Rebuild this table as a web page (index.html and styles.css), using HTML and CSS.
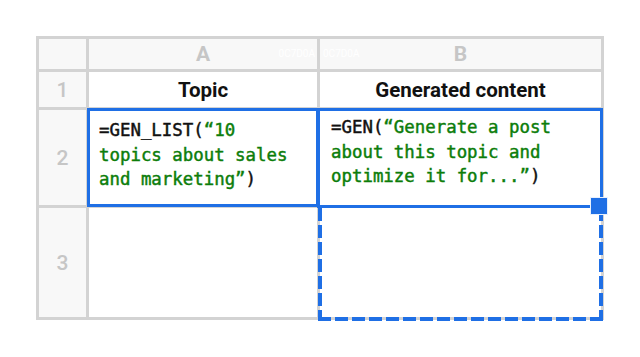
FILE: index.html
```html
<!DOCTYPE html>
<html>
<head>
<meta charset="utf-8">
<link rel="stylesheet" href="styles.css">
</head>
<body>
<div class="sheet">
  <div class="cell corner"></div>
  <div class="cell colhead">A<span class="hex hex-a">0C7D0A</span></div>
  <div class="cell colhead">B<span class="hex hex-b">0C7D0A</span></div>

  <div class="cell rowhead">1</div>
  <div class="cell title">Topic</div>
  <div class="cell title">Generated content</div>

  <div class="cell rowhead">2</div>
  <div class="cell formula sel sel-a"><span class="fn">=GEN_LIST(</span><span class="str">“10<br>topics about sales<br>and marketing”</span><span class="fn">)</span></div>
  <div class="cell formula sel sel-b"><span class="fn">=GEN(</span><span class="str">“Generate a post<br>about this topic and<br>optimize it for...”</span><span class="fn">)</span><span class="handle"></span></div>

  <div class="cell rowhead">3</div>
  <div class="cell"></div>
  <div class="cell fill"></div>
</div>
</body>
</html>
```

FILE: styles.css
```css
html, body {
  margin: 0;
  padding: 0;
  background: #ffffff;
}
body {
  padding: 36px 0 0 36px;
  width: 640px;
  height: 357px;
  box-sizing: border-box;
  font-family: Roboto, "Noto Sans", sans-serif;
}
.sheet {
  display: grid;
  grid-template-columns: 47px 228px 281px;
  grid-template-rows: 30px 35px 95px 109px;
  gap: 3px;
  padding: 3px;
  width: 568px;
  box-sizing: border-box;
  background: #d3d3d3;
}
.cell {
  background: #ffffff;
  position: relative;
}
.corner, .colhead, .rowhead {
  background: #f8f8f8;
}
.colhead, .rowhead {
  display: flex;
  align-items: center;
  justify-content: center;
  color: #c6c6c6;
  font-size: 21px;
}
.colhead {
  font-weight: 700;
}
.rowhead {
  font-weight: 500;
}
.hex {
  position: absolute;
  top: 9px;
  font-size: 10px;
  font-weight: 400;
  color: #ffffff;
  white-space: nowrap;
}
.hex-a { right: 2px; }
.hex-b { left: 3px; }
.title {
  display: flex;
  align-items: center;
  justify-content: center;
  font-weight: 700;
  font-size: 20.5px;
  color: #111111;
}
.formula {
  font-family: "DejaVu Sans Mono", "Liberation Mono", monospace;
  font-size: 17.4px;
  line-height: 24.5px;
  color: #111111;
  -webkit-text-stroke: 0.45px currentColor;
  white-space: nowrap;
}
.sel-a {
  padding: 8px 0 0 10px;
}
.sel-b {
  padding: 5px 0 0 11px;
}
.str {
  color: #0c7d0a;
}
.sel::after {
  content: "";
  position: absolute;
  top: -2px;
  left: -2px;
  right: -2px;
  bottom: -2px;
  border: 3.5px solid #1f6fe5;
  pointer-events: none;
}
.sel-b::after {
  left: -3px;
  bottom: -3px;
}
.fill::after {
  content: "";
  position: absolute;
  top: 0;
  left: -2px;
  right: -2px;
  bottom: -4px;
  background:
    repeating-linear-gradient(to bottom, #1f6fe5 0 13px, transparent 13px 17px) left top / 4px 100% no-repeat,
    repeating-linear-gradient(to bottom, #1f6fe5 0 13px, transparent 13px 17px) right top / 4px 100% no-repeat,
    repeating-linear-gradient(to right, #1f6fe5 0 13px, transparent 13px 17px) left bottom / 100% 4px no-repeat;
}
.handle {
  position: absolute;
  right: -7px;
  bottom: -10px;
  width: 16px;
  height: 16px;
  background: #1f6fe5;
  border: 1px solid #e8f0fd;
  z-index: 2;
}
```
